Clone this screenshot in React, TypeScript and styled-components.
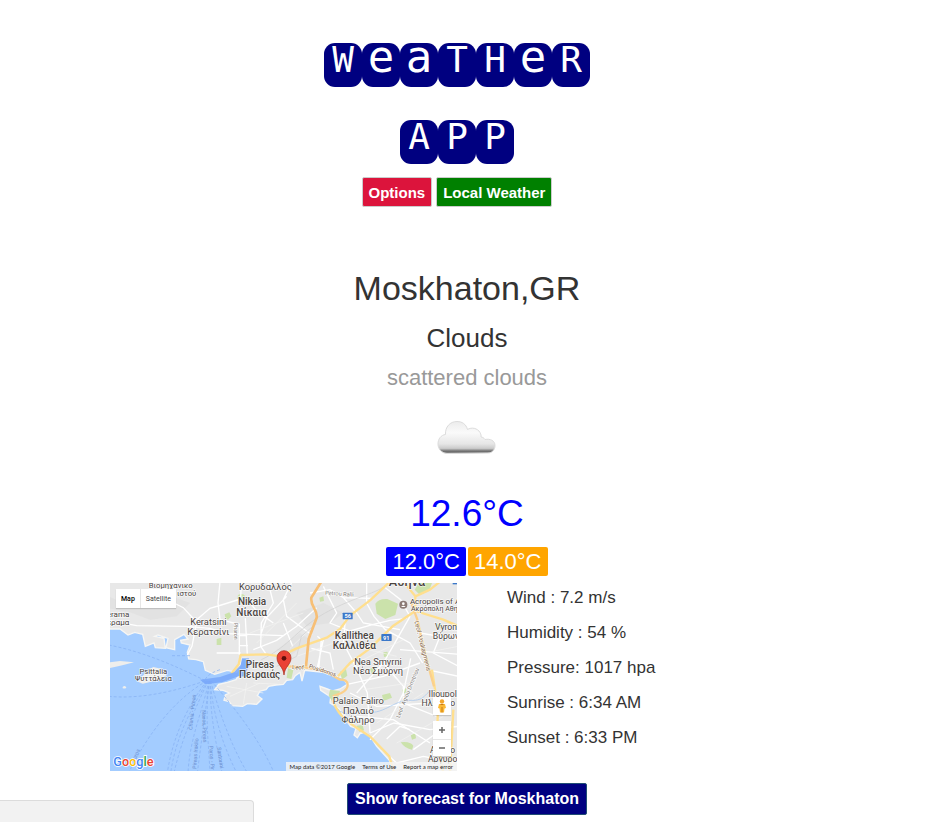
import React from "react";
import styled, { createGlobalStyle } from "styled-components";

const GlobalStyle = createGlobalStyle`
  * { box-sizing: border-box; }
  body {
    margin: 0;
    background: #fff;
    color: #333;
    font-family: "Liberation Sans", Arial, sans-serif;
  }
`;

const Page = styled.div`
  padding: 43px 18px 7px 0;
  display: flex;
  flex-direction: column;
  align-items: center;
`;

const Header = styled.header`
  padding-right: 20px;
  display: flex;
  flex-direction: column;
  align-items: center;
`;

const Title = styled.h1`
  margin: 0;
  display: flex;
  flex-direction: column;
  align-items: center;
  gap: 33px;
  font-weight: 400;
`;

const Word = styled.span`
  display: flex;
`;

const Tile = styled.span<{ $small: boolean }>`
  width: 38px;
  height: 44px;
  border-radius: 11px;
  background: #000080;
  color: #fff;
  text-align: center;
  font-family: "DejaVu Sans Mono", monospace;
  font-size: ${(p) => (p.$small ? 44 : 36)}px;
  line-height: ${(p) => (p.$small ? 28 : 34)}px;
`;

const Actions = styled.div`
  margin-top: 13px;
  display: flex;
  gap: 4px;
`;

const ActionButton = styled.button<{ $color: string }>`
  height: 30px;
  padding: 0 6px;
  border: 1px solid #ccc;
  border-radius: 2px;
  background: ${(p) => p.$color};
  color: #fff;
  font: bold 15px "Liberation Sans", Arial, sans-serif;
  cursor: pointer;
`;

const Summary = styled.section`
  margin-top: 61px;
  display: flex;
  flex-direction: column;
  align-items: center;
`;

const City = styled.h2`
  margin: 0;
  font-size: 34px;
  line-height: 40px;
  font-weight: 400;
`;

const Condition = styled.h3`
  margin: 15px 0 0;
  font-size: 26px;
  line-height: 30px;
  font-weight: 400;
`;

const Description = styled.p`
  margin: 13px 0 30px;
  font-size: 22px;
  line-height: 24px;
  color: #999;
`;

const Temperature = styled.p`
  margin: 36px 0 0;
  font-size: 37px;
  line-height: 44px;
  color: #00f;
`;

const Range = styled.div`
  margin-top: 11px;
  display: flex;
  gap: 2px;
`;

const Badge = styled.span<{ $color: string }>`
  padding: 0 6px;
  border-radius: 2px;
  background: ${(p) => p.$color};
  color: #fff;
  font-size: 22px;
  line-height: 29px;
`;

const Content = styled.main`
  width: 100%;
  max-width: 714px;
  margin-top: 7px;
  display: grid;
  grid-template-columns: 347fr 317fr;
  gap: 50px;
`;

const MapFrame = styled.div`
  position: relative;
  overflow: hidden;
  font-family: Roboto, sans-serif;
`;

const MapDrawing = styled.svg`
  display: block;
  width: 100%;
  height: auto;
`;

const MapTypes = styled.div`
  position: absolute;
  left: 6px;
  top: 6px;
  display: flex;
  background: #fff;
  box-shadow: 0 1px 1px rgba(0, 0, 0, 0.15);
`;

const MapType = styled.button<{ $active?: boolean }>`
  height: 19px;
  padding: 0 5px;
  border: 0;
  border-left: ${(p) => (p.$active ? "0" : "1px solid #e6e6e6")};
  background: #fff;
  color: ${(p) => (p.$active ? "#000" : "#444")};
  font: ${(p) => (p.$active ? 500 : 400)} 7px Roboto, sans-serif;
`;

const MapTools = styled.div`
  position: absolute;
  right: 6px;
  bottom: 15px;
  display: flex;
  flex-direction: column;
  gap: 6px;
`;

const ToolGroup = styled.div`
  display: flex;
  flex-direction: column;
  background: #fff;
  box-shadow: 0 1px 1px rgba(0, 0, 0, 0.15);
`;

const Tool = styled.button`
  width: 18px;
  height: 18px;
  padding: 0;
  border: 0;
  background: none;
  display: flex;
  align-items: center;
  justify-content: center;
  & + & {
    height: 17px;
    border-top: 1px solid #e6e6e6;
  }
`;

const Legal = styled.div`
  position: absolute;
  right: 0;
  bottom: 0;
  display: flex;
  gap: 7px;
  padding: 0 4px;
  background: rgba(245, 245, 245, 0.8);
  color: #222;
  font-family: Lato, sans-serif;
  font-size: 6px;
  line-height: 9px;
  white-space: nowrap;
`;

const LegalLink = styled.a`
  color: inherit;
  text-decoration: none;
`;

const Details = styled.ul`
  margin: 0;
  padding: 5px 0 0;
  list-style: none;
  display: flex;
  flex-direction: column;
  gap: 15px;
  font-size: 17px;
  line-height: 20px;
`;

const ForecastButton = styled.button`
  margin-top: 12px;
  height: 32px;
  padding: 0 7px;
  border: 1px solid #204d74;
  border-radius: 2px;
  background: #000080;
  color: #fff;
  font: bold 16px "Liberation Sans", Arial, sans-serif;
  cursor: pointer;
`;

const StatusBubble = styled.div`
  position: fixed;
  left: 0;
  bottom: 0;
  width: 254px;
  height: 22px;
  background: #f2f2f2;
  border: solid #dcdcdc;
  border-width: 1px 1px 0 0;
  border-radius: 0 4px 0 0;
`;

const CloudIcon = () => (
  <svg width="60" height="36" viewBox="0 0 60 36" role="img" aria-label="scattered clouds">
    <defs>
      <linearGradient id="cloud" x1="0" y1="0" x2="0" y2="1">
        <stop offset="0" stopColor="#ececec" />
        <stop offset="0.35" stopColor="#fafafa" />
        <stop offset="0.7" stopColor="#e6e6e6" />
        <stop offset="0.84" stopColor="#cbcbcb" />
        <stop offset="0.93" stopColor="#6b6b6b" />
        <stop offset="1" stopColor="#909090" />
      </linearGradient>
    </defs>
    <path
      d="M10 33.5C4.500 33 1 29 1 24c0-5 3-9 7.500-9.500C8 7 13 1.500 20 1.500c5 0 9 2.500 10.500 8 4-2.500 10-1.500 12.500 3 1 2 1.300 3 1 4.500 1.800.2 3 1 4 2.500 5-1 10 1 10 6 0 4.500-3 7.500-7 7.500z"
      fill="url(#cloud)"
      stroke="#dcdcdc"
      strokeWidth="1"
    />
  </svg>
);

type LabelProps = { x: number; y: number; size: number; bold?: boolean; color?: string; turn?: number; children: string };

const MapLabel = ({ x, y, size, bold, color = "#4a443f", turn = 0, children }: LabelProps) => (
  <text
    x={x}
    y={y}
    fontSize={size}
    fontWeight={bold ? 500 : 400}
    fill={color}
    stroke="#fff"
    strokeOpacity="0.75"
    strokeWidth="4"
    paintOrder="stroke"
    textAnchor="middle"
    transform={turn ? `rotate(${turn} ${x} ${y})` : undefined}
  >
    {children}
  </text>
);

const places: LabelProps[] = [
  { x: 182, y: 15, size: 23, children: "Βιομηχανικο" },
  { x: 230, y: 38, size: 23, children: "ιστού" },
  { x: 466, y: 20, size: 28, children: "Κορυδαλλός" },
  { x: 426, y: 67, size: 30, bold: true, children: "Nikaia" },
  { x: 425, y: 99, size: 30, bold: true, children: "Νίκαια" },
  { x: 295, y: 126, size: 28, children: "Keratsini" },
  { x: 295, y: 155, size: 28, children: "Κερατσίνι" },
  { x: 24, y: 101, size: 24, children: "erama" },
  { x: 24, y: 126, size: 24, children: "έραμα" },
  { x: 891, y: 8, size: 38, bold: true, children: "Αθήνα" },
  { x: 975, y: 62, size: 24, children: "Acropolis of A" },
  { x: 978, y: 84, size: 21, children: "Ακρόπολη Αθην" },
  { x: 1008, y: 142, size: 26, children: "Vyron" },
  { x: 1008, y: 169, size: 26, children: "Βύρων" },
  { x: 733, y: 168, size: 30, bold: true, children: "Kallithea" },
  { x: 733, y: 198, size: 30, bold: true, children: "Καλλιθέα" },
  { x: 804, y: 245, size: 28, children: "Nea Smyrni" },
  { x: 804, y: 274, size: 28, children: "Νέα Σμύρνη" },
  { x: 450, y: 254, size: 30, bold: true, children: "Pireas" },
  { x: 449, y: 285, size: 30, bold: true, children: "Πειραιάς" },
  { x: 745, y: 364, size: 28, children: "Palaio Faliro" },
  { x: 745, y: 392, size: 28, children: "Παλαιό" },
  { x: 744, y: 419, size: 28, children: "Φάληρο" },
  { x: 130, y: 273, size: 23, children: "Psittalia" },
  { x: 130, y: 295, size: 23, children: "Ψυττάλεια" },
  { x: 998, y: 341, size: 26, children: "Ilioupol" },
  { x: 985, y: 370, size: 26, children: "Ηλιούπο" },
  { x: 998, y: 510, size: 26, children: "Argyro" },
  { x: 998, y: 537, size: 26, children: "Αργυρο" },
];

const streets: LabelProps[] = [
  { x: 688, y: 38, size: 17, turn: 4, color: "#85807a", children: "Petrou Ralli" },
  { x: 373, y: 145, size: 16, turn: 90, color: "#85807a", children: "Pharon" },
  { x: 566, y: 259, size: 18, turn: 3, color: "#7b5a3c", children: "Leof." },
  { x: 636, y: 268, size: 18, turn: 18, color: "#7b5a3c", children: "Posidonos" },
  { x: 932, y: 190, size: 18, turn: 76, color: "#7b5a3c", children: "Leof. Vouliagmenis" },
  { x: 898, y: 332, size: 17, turn: -68, color: "#85807a", children: "Leof. Agiou Dimitriou" },
];

const ferries: LabelProps[] = [
  { x: 252, y: 388, size: 16, turn: -84, color: "#6b8fd0", children: "Chania - Pireas" },
  { x: 262, y: 512, size: 16, turn: -86, color: "#6b8fd0", children: "Pireas Iraklio" },
  { x: 278, y: 430, size: 16, turn: 88, color: "#6b8fd0", children: "Naxos, Pireas" },
  { x: 300, y: 525, size: 16, turn: 86, color: "#6b8fd0", children: "Paros - Pir" },
  { x: 326, y: 525, size: 16, turn: 82, color: "#6b8fd0", children: "Santorini" },
  { x: 82, y: 520, size: 16, turn: -66, color: "#6b8fd0", children: "Poros" },
];

const RegionMap = () => (
  <MapDrawing viewBox="0 0 1041 564" role="img" aria-label="Map of Pireas">
    <rect width="1041" height="564" fill="#a3ccff" />
    <path
      fill="#e8e8e8"
      stroke="#f6f6f4"
      strokeWidth="4"
      d="M-5-5H1046V569H852L838 532 800 490 782 462 764 448 750 452 742 464 732 456 738 436 722 430 704 406 688 378 660 360 662 342 632 322 630 310 652 318 668 324 690 318 712 304 700 286 676 278 640 268 604 264 584 262 576 294 570 268 556 278 548 290 530 292 520 304 498 306 476 310 468 320 450 324 442 338 456 348 440 364 412 362 398 370 366 368 358 356 342 352 346 336 358 330 340 322 314 320 326 304 352 298 378 290 384 280 418 282 404 264 420 246 424 234 410 226 396 226 390 248 380 268 352 262 314 274 286 262 280 236 258 230 236 228 232 208 240 186 214 180 212 172 234 168 222 154 194 170 194 200 168 194 174 166 144 156 134 160 162 166 166 196 136 194 132 180 106 190 98 154 74 148 54 156 30 138-5 138Z"
    />
    <path fill="#eeeeec" d="M-4 238 30 234 72 238 40 246 24 250-4 256ZM112 262 130 252 156 258 170 276 152 290 124 296 98 302 84 296ZM38 312q6-6 10 0t-10 4z" />
    <path fill="#dedede" d="M-4 40 60 70 120 66 190 42 240 60 200 100 120 110 60 88-4 76ZM560 90 640 60 700 90 660 120 590 130ZM500 200 570 150 600 170 540 220Z" opacity="0.6" />
    <g fill="#cbe2ab">
      <path d="M796 62q10-16 36-14l32 14-8 34-30 12-26-16z" />
      <path d="M384 36q14-8 22 4l-8 12-16-4zM344 94l14-6 6 12-10 10-8-4zM320 168l14-4v22h-14zM628 44l12-4 2 14-12 2zM534 256l16 6-6 26-14-4zM660 320l30 4-6 20-18 10-10-16zM690 266l18-8 4 20-16 12zM780 258l14-8 4 20-12 4zM816 336l24-6 6 14-26 10zM872 478q28-4 38 10l-4 12q-20-2-34-22zM902 456l14-6 2 16-12 4zM978 124l16-2 2 14h-14zM820 208l12-2 4 14-14 2zM926 0h40l-8 22-28 14-16-16zM740 428l18-2 4 16-14 4zM876 320l12-4 2 12-10 4z" />
    </g>
    <g fill="none" stroke="#fff" strokeWidth="4">
      <path d="M-4 112 80 128 230 130 300 136 352 152 520 158" />
      <path d="M180 54 220 74 240 96 260 116 246 190 232 216M260 110 300 76 334 66 392 48 394-4M330-4 324 60 330 110 388 124 388 216M388 158H412M388 188H414M406 106 412 216" />
      <path d="M474-4 490 60 454 120 452 190 470 216M530 40 470 104 454 150M546-4 520 50 530 100 606 156M520 120 548 190" />
      <path d="M320 210 392 210M420 60 442 86 490 120" />
      <path d="M600 30 660 20 700 44 790 46M640 10 680 90 660 120 720 144 790 124M620 74 560 130 500 172 430 200M700 44 740 90 760 120 870 140" />
      <path d="M706 110 700 180 740 256 772 330 780 450M770-4 770 60 792 100 826 140 900 180 938 240" />
      <path d="M622 160 634 170 626 260M604 196 660 210 670 260M640 170 622 254" />
      <path d="M790 124 840 112 890 106M820 10 872 50 900 100M900 100 820 240 740 330" />
      <path d="M902 226 880 330 840 410 780 470M712 304 820 280 930 240M720 330 800 370 960 360M740 400 850 410 960 480M820 240 880 310 880 360 980 400" />
      <path d="M780 450 852 420 960 440 1046 430M830 468 870 430 900 440M816 500 860 540 940 520 1046 540M910 500 980 450M990 160 970 210 1046 250M950 260 1046 280M930 150 1046 170M870 200 1046 214" />
    </g>
    <g fill="none" stroke="#f5f5f3" strokeWidth="2">
      <path d="M420 150 580 90M440 180 560 60M560 220 700 170M540 196 620 120M690 180 860 220M700 260 880 170M760 320 900 300M800 420 940 330M800 240 910 330M860 480 1000 400M940 210 1046 190M350 310 460 330M360 340 450 300M400 364 410 300M430 300 510 304" />
    </g>
    <path fill="none" stroke="#cfcfcf" strokeWidth="2" d="M454 230C540 190 566 130 660 82S810 30 840-4M500 250 560 220 574 160 620 120" />
    <g fill="none" stroke="#9fc3ee" strokeWidth="2">
      <path d="M676 380 720 396M760 386C820 400 850 350 900 352S940 330 970 320" />
    </g>
    <g fill="none" stroke="#ffdf8e" strokeWidth="7" strokeLinejoin="round">
      <path d="M364 272 386 244 392 216 470 214 510 220 560 196 650 164 690 138 720 98 780 52 840-4" />
      <path d="M510 226 540 254M684 280 720 240 780 196 850 128 916 84 916 40 880-4M916 84 1000 110 1046 130M916 40 960 20 990-4" />
      <path d="M668 350C680 390 704 410 740 434L782 462 838 520 852 569M966 260 984 380 980 480 1000 569M1030 380 1020 569" />
    </g>
    <g fill="none" stroke="#f7bf76" strokeWidth="8" strokeLinejoin="round">
      <path d="M634-4 604 44C600 70 624 80 620 104L596 168 588 250" />
    </g>
    <g fill="none" stroke="#fbd08c" strokeWidth="7" strokeLinejoin="round">
      <path d="M540 250 588 254 640 262 690 290C720 288 720 316 694 330L668 340" />
      <path d="M904 60 922 110 940 190 958 260 972 310" />
    </g>
    <g fill="none" stroke="#83adf2" strokeWidth="2" strokeDasharray="9 6">
      <path d="M-4 186C100 206 200 250 284 292M-4 340C100 350 210 320 290 292M186 218H240M290 294C190 350 110 460 56 569M290 294C240 360 190 450 172 569M292 294C250 370 200 450 182 569M294 294C260 370 220 450 192 569M296 294C280 380 240 460 234 569M298 294 262 569M298 294C284 400 296 480 300 569M300 294C300 400 320 490 336 569M300 294C310 400 340 490 380 569M302 294C330 400 370 500 412 569M304 294C370 370 450 470 492 569M330 260C300 270 290 280 284 292" />
    </g>
    <path fill="#78a7fa" d="M270 290 330 282 372 268 392 246 396 226 416 226 424 240 408 266 414 282 386 280 336 298 286 304Z" opacity="0.85" />
    {places.map((p) => <MapLabel key={p.children} {...p} />)}
    {streets.map((p) => <MapLabel key={p.children} {...p} />)}
    {ferries.map((p) => (
      <text key={p.children} x={p.x} y={p.y} fontSize={p.size} fill={p.color} textAnchor="middle" transform={`rotate(${p.turn} ${p.x} ${p.y})`}>
        {p.children}
      </text>
    ))}
    <g fontSize="17" fontWeight="700" fill="#fff" textAnchor="middle">
      <rect x="698" y="89" width="30" height="20" rx="2" fill="#3b78c9" />
      <text x="713" y="105">56</text>
      <rect x="814" y="153" width="31" height="21" rx="2" fill="#3b78c9" />
      <text x="829" y="170">91</text>
      <rect x="1028" y="-6" width="20" height="10" fill="#3b78c9" />
    </g>
    <circle cx="880" cy="65" r="12" fill="#8b7a75" />
    <circle cx="880" cy="62" r="4" fill="#fff" />
    <path d="M873 72q7-7 14 0z" fill="#fff" />
    <path d="M522 276C520 250 501 246 501 224A21 21 0 0 1 543 224C543 246 524 250 522 276Z" fill="#ea4335" stroke="#a52714" strokeWidth="2" />
    <circle cx="522" cy="226" r="7" fill="#5f0f0a" />
    <text x="10" y="550" fontSize="38" fontWeight="500" stroke="#fff" strokeWidth="5" paintOrder="stroke">
      <tspan fill="#4285f4">G</tspan>
      <tspan fill="#ea4335">o</tspan>
      <tspan fill="#fbbc05">o</tspan>
      <tspan fill="#4285f4">g</tspan>
      <tspan fill="#34a853">l</tspan>
      <tspan fill="#ea4335">e</tspan>
    </text>
  </MapDrawing>
);

const words = ["WeaTHeR", "APP"];

const readings = [
  "Wind : 7.2 m/s",
  "Humidity : 54 %",
  "Pressure: 1017 hpa",
  "Sunrise : 6:34 AM",
  "Sunset : 6:33 PM",
];

export default function App() {
  return (
    <>
      <GlobalStyle />
      <Page>
        <Header>
          <Title>
            {words.map((word) => (
              <Word key={word}>
                {word.split("").map((letter, i) => (
                  <Tile key={i} $small={letter === letter.toLowerCase()}>{letter}</Tile>
                ))}
              </Word>
            ))}
          </Title>
          <Actions>
            <ActionButton $color="#dc143c">Options</ActionButton>
            <ActionButton $color="#008000">Local Weather</ActionButton>
          </Actions>
        </Header>
        <Summary>
          <City>Moskhaton,GR</City>
          <Condition>Clouds</Condition>
          <Description>scattered clouds</Description>
          <CloudIcon />
          <Temperature>12.6°C</Temperature>
          <Range>
            <Badge $color="#0000ff">12.0°C</Badge>
            <Badge $color="#ffa500">14.0°C</Badge>
          </Range>
        </Summary>
        <Content>
          <MapFrame>
            <RegionMap />
            <MapTypes>
              <MapType $active>Map</MapType>
              <MapType>Satellite</MapType>
            </MapTypes>
            <MapTools>
              <ToolGroup>
                <Tool aria-label="Street View">
                  <svg width="10" height="14" viewBox="0 0 10 14">
                    <circle cx="5" cy="2.500" r="2.200" fill="#f2a62c" />
                    <path d="M2 5h6l1 4-1.500.5L7 13.500H3L2.500 9.500 1 9z" fill="#fbb936" />
                    <path d="M5 8v5.500M3.500 5.500h3" stroke="#c97a15" strokeWidth="1" />
                  </svg>
                </Tool>
              </ToolGroup>
              <ToolGroup>
                <Tool aria-label="Zoom in">
                  <svg width="8" height="8" viewBox="0 0 8 8"><path d="M4 1v6M1 4h6" stroke="#666" strokeWidth="1.500" /></svg>
                </Tool>
                <Tool aria-label="Zoom out">
                  <svg width="8" height="8" viewBox="0 0 8 8"><path d="M1 4h6" stroke="#666" strokeWidth="1.500" /></svg>
                </Tool>
              </ToolGroup>
            </MapTools>
            <Legal>
              <span>Map data ©2017 Google</span>
              <LegalLink href="#terms">Terms of Use</LegalLink>
              <LegalLink href="#report">Report a map error</LegalLink>
            </Legal>
          </MapFrame>
          <Details>
            {readings.map((reading) => (
              <li key={reading}>{reading}</li>
            ))}
          </Details>
        </Content>
        <ForecastButton>Show forecast for Moskhaton</ForecastButton>
      </Page>
      <StatusBubble />
    </>
  );
}
